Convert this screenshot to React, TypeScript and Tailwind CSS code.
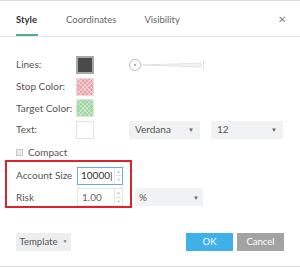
export default function App() {
  return (
    <div className="relative w-[300px] h-[267px] bg-white text-[10px] text-[#555] border-t border-b border-[#dcdcdc] overflow-hidden" style={{ fontFamily: 'Lato, "Open Sans", "Liberation Sans", sans-serif' }}>
      <div className="flex items-end h-[36px] border-b border-[#e6e6e6] pl-[16px] gap-[28px]">
        <div className="flex flex-col items-start">
          <span className="text-[9.5px] text-[#333] font-bold leading-none pb-[10px]">Style</span>
          <div className="h-[2px] w-[22px] bg-[#4fae8c]" />
        </div>
        <span className="text-[9.5px] text-[#666] leading-none pb-[12px]">Coordinates</span>
        <span className="text-[9.5px] text-[#666] leading-none pb-[12px]">Visibility</span>
      </div>
      <span className="absolute left-[278px] top-[11px] text-[10px] text-[#888]">✕</span>

      <div className="pl-[16px] pt-[17px]">
        <div className="flex items-center h-[21.7px]">
          <span className="w-[60px]">Lines:</span>
          <div className="w-[18px] h-[18px] bg-[#4a4a4a] border-2 border-[#a8a8a8]" />
          <svg width="76" height="14" viewBox="0 0 76 14" className="ml-[35px]">
            <circle cx="6" cy="7" r="5.5" fill="white" stroke="#bbb" />
            <circle cx="6" cy="7" r="1" fill="#999" />
            <path d="M11.5 7 L45 6 L72 5 L72 9 L45 8 Z" fill="#f3f3f3" stroke="#ddd" strokeWidth="0.8" />
            <line x1="74.5" y1="2" x2="74.5" y2="12" stroke="#e0e0e0" />
          </svg>
        </div>
        <div className="flex items-center h-[21.7px]">
          <span className="w-[60px]">Stop Color:</span>
          <div className="w-[18px] h-[18px] border border-[#f0d6d8] bg-[#e8a3aa]" style={{ backgroundImage: 'repeating-linear-gradient(45deg, rgba(255,255,255,0.35) 0 1px, transparent 1px 3px), repeating-linear-gradient(-45deg, rgba(255,255,255,0.35) 0 1px, transparent 1px 3px)' }} />
        </div>
        <div className="flex items-center h-[21.7px]">
          <span className="w-[60px]">Target Color:</span>
          <div className="w-[18px] h-[18px] border border-[#d3ebd4] bg-[#9bd29e]" style={{ backgroundImage: 'repeating-linear-gradient(45deg, rgba(255,255,255,0.35) 0 1px, transparent 1px 3px), repeating-linear-gradient(-45deg, rgba(255,255,255,0.35) 0 1px, transparent 1px 3px)' }} />
        </div>
        <div className="flex items-center h-[21.7px]">
          <span className="w-[60px]">Text:</span>
          <div className="w-[18px] h-[18px] border border-[#e2e2e2] bg-white" />
          <div className="ml-[35px] w-[71px] h-[18px] bg-[#f1f2f3] flex items-center justify-between px-[6px] text-[#555]">
            <span>Verdana</span>
            <span className="text-[6px] text-[#666]">▼</span>
          </div>
          <div className="ml-[11px] w-[72px] h-[18px] bg-[#f1f2f3] flex items-center justify-between px-[6px] text-[#555]">
            <span>12</span>
            <span className="text-[6px] text-[#666]">▼</span>
          </div>
        </div>
        <div className="flex items-center h-[22px] gap-[5px] mt-[1px]">
          <div className="w-[7px] h-[7px] border border-[#c8c8c8] bg-[#ececec]" />
          <span>Compact</span>
        </div>
        <div className="flex items-center h-[22px] mt-[1px]">
          <span className="w-[61px]">Account Size</span>
          <div className="w-[46px] h-[18px] border border-[#6aaadc] flex items-center justify-between pl-[3px] text-[#333]">
            <span>10000<span className="text-[#333]">|</span></span>
            <Spinner />
          </div>
        </div>
        <div className="flex items-center h-[21px]">
          <span className="w-[61px]">Risk</span>
          <div className="w-[46px] h-[18px] border border-[#e6e6e6] flex items-center justify-between pl-[4px] text-[#666]">
            <span>1.00</span>
            <Spinner />
          </div>
          <div className="ml-[12px] w-[68px] h-[18px] bg-[#f1f2f3] flex items-center justify-between px-[4px]">
            <span>%</span>
            <span className="text-[6px] text-[#666]">▼</span>
          </div>
        </div>

        <div className="flex items-center justify-between pr-[16px] mt-[25px]">
          <div className="w-[55px] h-[18px] bg-[#eceef0] flex items-center justify-center gap-[5px] text-[9.5px] text-[#555]">
            <span>Template</span>
            <span className="text-[5px] text-[#777]">▼</span>
          </div>
          <div className="flex gap-[4px] text-[9.5px]">
            <div className="w-[47px] h-[18px] bg-[#3fb0e8] text-white flex items-center justify-center">OK</div>
            <div className="w-[47px] h-[18px] bg-[#a3a3a3] text-white flex items-center justify-center">Cancel</div>
          </div>
        </div>
      </div>

      <div className="absolute left-[5px] top-[159px] w-[127px] h-[48px] border-2 border-[#d8262c]" />
    </div>
  );
}

function Spinner() {
  return (
    <div className="w-[8px] h-full border-l border-[#e6e6e6] flex flex-col">
      <div className="flex-1 flex items-center justify-center text-[4px] text-[#9bbcd8] border-b border-[#e6e6e6]">▲</div>
      <div className="flex-1 flex items-center justify-center text-[4px] text-[#9bbcd8]">▼</div>
    </div>
  );
}
